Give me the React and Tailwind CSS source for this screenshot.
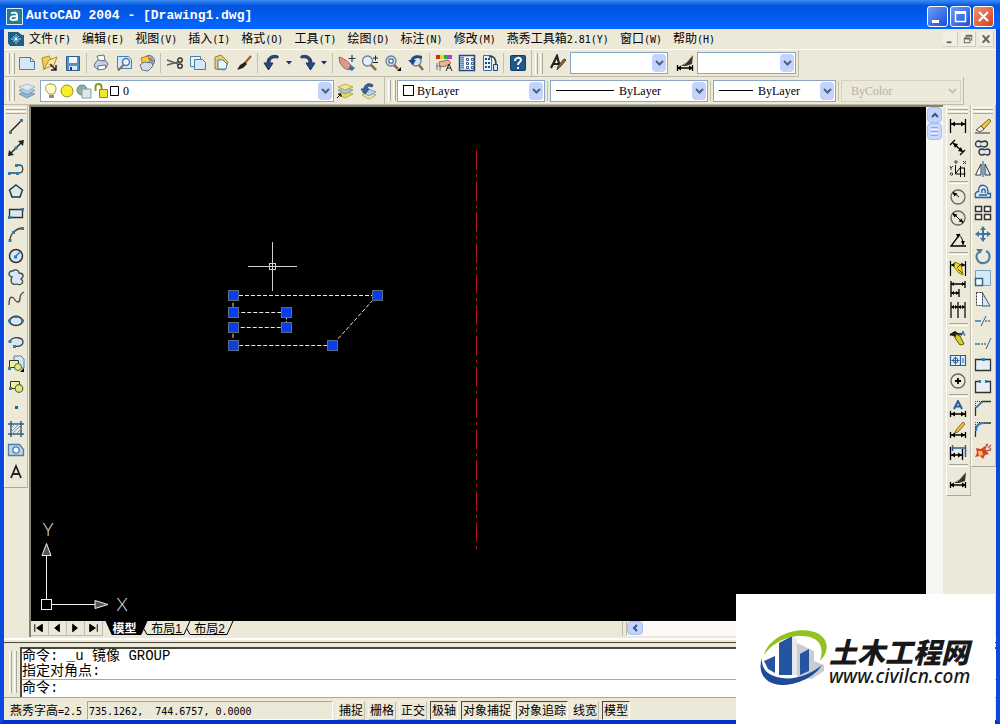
import React, { useState } from 'react';

const INK = '#222222';
const NAVY = '#1f3f66';
const BLUE = '#4a7fa8';
const PALE = '#d6e7f5';

const icons = {
    // standard
    new: <path d="M1.5 3.5h11l4 4v8h-15z M12.5 3.5v4h4" fill={PALE} stroke={BLUE} />,
    open: (
        <>
            <path d="M1 4l7-2 2 3-7 11z" fill="#f4cf5d" stroke="#b18a25" />
            <path d="M3 15l5-9 8-3-3 8z" fill="#fbe9a0" stroke="#b18a25" />
            <path d="M9 10l6 6M15 11v5h-5" stroke={INK} strokeWidth="1.5" fill="none" />
        </>
    ),
    save: (
        <>
            <path d="M2.5 2.5h13v14h-13z" fill="#5a8fc0" stroke="#2f5d8c" />
            <path d="M5 3h8v6H5z" fill="#f2f6fa" />
            <path d="M5 12h8v4H5z" fill={PALE} />
            <path d="M6 13h2v3H6z" fill={NAVY} />
        </>
    ),
    print: (
        <>
            <path d="M5 2l7-1 1 5-6 2z" fill="#fff" stroke="#5f7391" />
            <path d="M3 9l3-3 8 1 2 3-2 4-9 1-3-3z" fill="#c3cfe3" stroke="#5f7391" />
            <path d="M6 12l8-1-1 4-7 1z" fill="#fff" stroke="#5f7391" />
        </>
    ),
    preview: (
        <>
            <path d="M2.5 2.5h11l3 3v9h-14z" fill={PALE} stroke={BLUE} />
            <circle cx="11" cy="8" r="3.5" fill="#eef6ff" stroke={BLUE} strokeWidth="1.5" />
            <path d="M8.5 11L3 16.5" stroke="#8d6a4a" strokeWidth="2" />
        </>
    ),
    publish: (
        <>
            <circle cx="11" cy="7" r="5.5" fill="#9cc1e4" stroke="#3a6ea5" />
            <path d="M3 4l7-2 2 6-7 3z" fill="#f6cf3e" stroke="#a5801c" />
            <path d="M2 11l4-3 8 1 1 3-5 5-6-1z" fill="#d8dbe6" stroke="#5f7391" />
            <path d="M12 4l3 4" stroke="#d0701f" strokeWidth="2" />
        </>
    ),
    cut: (
        <>
            <path d="M1 6l11 4M1 11l11-3" stroke="#56616e" strokeWidth="1.5" />
            <circle cx="14" cy="6" r="2.2" fill="none" stroke={INK} strokeWidth="1.3" />
            <circle cx="14" cy="12" r="2.2" fill="none" stroke={INK} strokeWidth="1.3" />
        </>
    ),
    copy: (
        <>
            <path d="M1.5 2.5h10v10h-10z" fill="#eaf3fb" stroke={BLUE} />
            <path d="M5.5 5.5h8l3 3v7h-11z" fill={PALE} stroke={BLUE} />
        </>
    ),
    paste: (
        <>
            <path d="M3 3l6-2 7 7-3 8-10-1z" fill="#e3cf7c" stroke="#94803a" />
            <path d="M6 6h5l4 4-1 5H6z" fill="#eaf3fb" stroke={BLUE} />
        </>
    ),
    brush: (
        <>
            <path d="M16 2l-7 8" stroke="#9a5a2c" strokeWidth="2" />
            <path d="M10 8l2 2-4 4-6 2 3-5z" fill={INK} />
        </>
    ),
    undo: <path d="M15 2C9 0 4 3 4 9H1l4.5 7L10 9H7c0-4 2-6 8-5z" fill="#27487d" stroke="#1c355f" />,
    redo: <path d="M3 2c6-2 11 1 11 7h3l-4.5 7L8 9h3c0-4-2-6-8-5z" fill="#27487d" stroke="#1c355f" />,
    pan: (
        <>
            <path d="M1 3l3 1 5 3 4 4-3 5-4-2-4-5z" fill="#dc9a8c" stroke="#a9665c" />
            <path d="M10 15l3-4 4 3-3 3z" fill="#3f6fa5" />
            <path d="M14 1v7M10.5 4.5h7" stroke={NAVY} strokeWidth="1.2" />
        </>
    ),
    zoom: (
        <>
            <circle cx="6.5" cy="7" r="5" fill="#e4eff8" stroke="#68829a" strokeWidth="1.3" />
            <path d="M10 11l5 5" stroke="#8d6a4a" strokeWidth="2.5" />
            <path d="M12 4h5M14.5 1.5v5M12 8.5h5" stroke={INK} />
        </>
    ),
    zoomwin: (
        <>
            <circle cx="7" cy="7" r="5" fill="#d3e4f3" stroke="#68829a" strokeWidth="1.3" />
            <path d="M5 5h4v4H5z" fill="#fff" stroke="#27487d" />
            <path d="M10 11l4 4" stroke="#8d6a4a" strokeWidth="2.5" />
            <path d="M17 13v4h-4z" fill="#000" />
        </>
    ),
    zoomprev: (
        <>
            <circle cx="9" cy="7" r="5" fill="#d3e4f3" stroke="#68829a" strokeWidth="1.3" />
            <path d="M12 11l4 5" stroke="#8d6a4a" strokeWidth="2.5" />
            <path d="M15 2C9 0 5 3 4 6H1l5 5 3-5H7c1-2 4-3 8-1z" fill="#27487d" />
        </>
    ),
    props: (
        <>
            <path d="M1 1h4v4H1z" fill="#e02020" />
            <path d="M5 1h4v4H5z" fill="#e8d820" />
            <path d="M9 1h4v4H9z" fill="#20b040" />
            <path d="M13 1h4v4h-4z" fill="#b040d0" />
            <path d="M4 8l9-2 3 3-5 3-6 1z" fill="#eab39c" stroke="#a9665c" />
            <path d="M2 9v7M5 13v4M1 12h5" stroke="#5c7a96" />
            <path d="M11 17l3-7 3 7M12 14h4" stroke={INK} fill="none" />
        </>
    ),
    designcenter: (
        <>
            <path d="M1.5 1.5h15v15h-15z" fill="#f4f8fc" stroke="#27487d" strokeWidth="1.5" />
            <path d="M2 2h4v14H2z" fill="#9fbddb" />
            <path d="M3 3v12M5 3v12" stroke="#27487d" strokeDasharray="1 1" />
            <path d="M8.5 4.5h2v2h-2zM13.5 4.5h2v2h-2zM8.5 8.5h2v2h-2zM13.5 8.5h2v2h-2zM8.5 12.5h2v2h-2zM13.5 12.5h2v2h-2z" stroke="#27487d" strokeWidth=".9" />
        </>
    ),
    palette: (
        <>
            <path d="M2.5 1.5h8v15h-8z" fill="#eaf3fb" stroke="#3a6ea5" />
            <path d="M4 4h2v2H4zM7 4h2v2H7zM4 8h2v2H4zM7 8h2v2H7zM4 12h2v2H4zM7 12h2v2H7z" fill="#27487d" />
            <path d="M8 3c5-2 7 2 7 8" fill="none" stroke={NAVY} strokeWidth="1.5" />
            <path d="M12.5 10.5h4v6h-4z" fill={PALE} stroke={NAVY} />
        </>
    ),
    help: (
        <>
            <rect x="1.5" y="1.5" width="15" height="15" rx="1" fill="#1f578f" stroke="#123e6b" />
            <path d="M6 7c0-4 6-4 6-1 0 2-3 2-3 5M9 13v2" fill="none" stroke="#fff" strokeWidth="2" />
        </>
    ),
    textstyle: (
        <>
            <path d="M2 14L8 2l3 11M4 10h6" fill="none" stroke={INK} strokeWidth="2.2" />
            <path d="M17 6l-5 6-4 4 1-4 6-7z" fill="#8a6a55" stroke="#4b3a2e" />
        </>
    ),
    dimstyle: (
        <>
            <path d="M1 14h16M1.5 11v6M16.5 11v6" stroke="#000" strokeWidth="1.3" />
            <path d="M1 14l4-2.5v5zM17 14l-4-2.5v5z" fill="#000" />
            <path d="M17 1l-1 9-6 2H5l6-4z" fill="#3b302a" />
            <path d="M17 1l-9 10" stroke="#d9c6b3" strokeWidth=".7" />
        </>
    ),
    // layers
    layers: (
        <>
            <path d="M1 12l8-3 8 3-8 4z" fill="#8fb4d4" stroke="#5d86a8" strokeWidth=".7" />
            <path d="M1 8.5L9 5l8 3.5-8 4z" fill="#b5cfe4" stroke="#5d86a8" strokeWidth=".7" />
            <path d="M1 5l8-3 8 3-8 4z" fill="#dbe8f3" stroke="#8eabc4" strokeWidth=".7" />
        </>
    ),
    layercurrent: (
        <>
            <path d="M2 12l7-3 8 3-8 4z" fill="#f0d850" stroke="#a8922a" strokeWidth=".7" />
            <path d="M2 8l7-3 8 3-8 4z" fill="#a9c7e0" stroke="#5d86a8" strokeWidth=".7" />
            <path d="M2 5l7-3 8 3-8 3z" fill="#f5e58a" stroke="#a8922a" strokeWidth=".7" />
            <path d="M1 16l4-4M2 12h3v3" stroke="#000" fill="none" />
        </>
    ),
    layerprev: (
        <>
            <path d="M3 13l7-3 7 3-7 4z" fill="#f3e9b5" stroke="#a8922a" strokeWidth=".7" />
            <path d="M3 10l7-3 7 3-7 4z" fill="#b5cfe4" stroke="#5d86a8" strokeWidth=".7" />
            <path d="M14 3C9 0 5 3 5 7H2l4 5 4-5H8c0-2 2-4 5-2z" fill="#3c659b" stroke="#27487d" />
        </>
    ),
    // draw
    line: (
        <>
            <path d="M3 15L15 3" stroke={INK} strokeWidth="1.5" />
            <path d="M2 14h3v3H2zM13 2h3v3h-3z" fill="#2f7fae" />
        </>
    ),
    xline: (
        <>
            <path d="M3 15L15 3" stroke={INK} strokeWidth="1.5" />
            <path d="M1 17l1-6 5 5zM17 1l-1 6-5-5z" fill={INK} />
            <path d="M7.5 7.5h3v3h-3z" fill="#2f7fae" />
        </>
    ),
    pline: (
        <>
            <path d="M2 13h9M9 5h3c5 0 5 8 0 8" fill="none" stroke="#444" strokeWidth="1.3" />
            <path d="M1 12h3v3H1zM9 12h3v3H9zM8 4h3v3H8z" fill="#2f7fae" />
        </>
    ),
    polygon: <path d="M9 3l6.5 5-2.5 7H5L2.5 8z" fill={PALE} stroke="#333" strokeWidth="1.5" />,
    rect: (
        <>
            <path d="M2.5 5.5h13v8h-13z" fill={PALE} stroke="#333" strokeWidth="1.3" />
            <path d="M1 12h3v3H1zM14 4h3v3h-3z" fill="#2f7fae" />
        </>
    ),
    arc: (
        <>
            <path d="M3 16C3 9 8 4 15 3" fill="none" stroke="#444" strokeWidth="1.3" />
            <path d="M1.5 14h3v3h-3zM5 6h3v3H5zM14 2h3v3h-3z" fill="#2f7fae" />
        </>
    ),
    circle: (
        <>
            <circle cx="9" cy="9" r="6.5" fill={PALE} stroke="#333" strokeWidth="1.5" />
            <path d="M8 10l5-5" stroke="#2f7fae" strokeWidth="1.5" />
            <path d="M7 8.5h3v3H7z" fill="#2f7fae" />
        </>
    ),
    cloud: <path d="M5 9C0 8 2 2 6 3c2-2 6-1 6 2 5 0 5 4 2 6 4 3 0 7-4 5-3 1-8 0-5-7z" fill={PALE} stroke="#444" strokeWidth="1.3" />,
    spline: <path d="M2 15C2 4 6 7 8 10s5 3 5-2c0-3 2-5 4-6" fill="none" stroke="#444" strokeWidth="1.3" />,
    ellipse: (
        <>
            <ellipse cx="9" cy="9" rx="6.5" ry="4.5" fill={PALE} stroke="#333" strokeWidth="1.5" />
            <path d="M1 7.5h3v3H1zM14 7.5h3v3h-3zM7.5 3h3v3h-3z" fill="#2f7fae" />
        </>
    ),
    earc: (
        <>
            <path d="M3 8c3-5 13-4 13 1 0 4-5 5-9 4" fill={PALE} stroke="#444" strokeWidth="1.3" />
            <path d="M1.5 7h3v3h-3zM6 12h3v3H6z" fill="#2f7fae" />
        </>
    ),
    insert: (
        <>
            <path d="M7 1h7l3 3v9H7z" fill={PALE} stroke={BLUE} />
            <path d="M2.5 5.5h9v7h-9z" fill="#f1efa0" stroke="#333" />
            <circle cx="11" cy="12" r="3.5" fill="#dfe88e" stroke="#4e6d22" />
            <path d="M1 12h3v3H1z" fill="#2f7fae" />
            <path d="M17 13v4h-4z" fill="#000" />
        </>
    ),
    block: (
        <>
            <path d="M3.5 4.5h9v7h-9z" fill="#f1efa0" stroke="#333" />
            <circle cx="12" cy="11.5" r="3.8" fill="#dfe88e" stroke="#4e6d22" strokeWidth="1.2" />
            <path d="M2 10h3v3H2z" fill="#2f7fae" />
        </>
    ),
    point: <path d="M8 8h3v3H8z" fill="#1f6488" />,
    hatch: (
        <>
            <path d="M4 1v16M14 1v16M1 4h16M1 14h16" stroke="#2d5f85" strokeWidth="1.5" />
            <path d="M4 8l4-4M4 12l8-8M5 14l9-9M9 14l5-5" stroke="#6d9dbd" />
        </>
    ),
    region: (
        <>
            <path d="M1.5 3.5h11l4 5v6h-15z" fill="#bcd5ea" stroke={BLUE} strokeWidth="1.3" />
            <circle cx="9" cy="9" r="3.2" fill="#f3f7fa" stroke={BLUE} strokeWidth="1.3" />
        </>
    ),
    mtext: <path d="M4 15L9 3l5 12M5.5 11h7" fill="none" stroke={INK} strokeWidth="1.8" />,
    // dimension
    dimlinear: (
        <>
            <path d="M1.5 2v14M16.5 2v14M2 7h14" stroke="#000" strokeWidth="1.3" />
            <path d="M2 7l4-2.5v5zM16 7l-4-2.5v5z" fill="#000" />
        </>
    ),
    dimaligned: (
        <>
            <path d="M4 5l10 9M1 7l5-5M11 17l5-5" stroke="#000" strokeWidth="1.3" />
            <path d="M4 5l5 1-3 4zM14 14l-5-1 3-4z" fill="#000" />
        </>
    ),
    dimordinate: (
        <>
            <path d="M6.5 5v9h10M7 13l4-5h5M11.5 6v11M15.5 8v9" stroke="#000" fill="none" />
            <path d="M1 6l1 2 2-2M2 8v2M14 1l3 3M17 1l-3 3" stroke="#333" fill="none" />
            <circle cx="2.5" cy="14" r="1.2" fill="none" stroke="#333" />
            <circle cx="7" cy="2" r="1.2" fill="none" stroke="#333" />
        </>
    ),
    dimradius: (
        <>
            <circle cx="9" cy="9" r="7" fill="none" stroke="#666" strokeWidth="1.3" />
            <path d="M4 4l6 5" stroke="#000" />
            <path d="M3.5 4.5l5 1-3 3z" fill="#000" />
        </>
    ),
    dimdiameter: (
        <>
            <circle cx="9" cy="9" r="7" fill="none" stroke="#666" strokeWidth="1.3" />
            <path d="M4 4l10 10" stroke="#000" />
            <path d="M3.5 4.5l5 1-3 3zM14.5 13.5l-5-1 3-3z" fill="#000" />
        </>
    ),
    dimangular: (
        <>
            <path d="M11 3L2 15h15" fill="none" stroke="#000" strokeWidth="1.3" />
            <path d="M8 4c4 0 6 4 6 10" fill="none" stroke="#000" />
            <path d="M7 3h4L9 7zM14 14l-2-4h4z" fill="#000" />
        </>
    ),
    dimquick: (
        <>
            <path d="M1.5 2v15M16.5 2v15M2 6h14" stroke="#000" strokeWidth="1.2" />
            <path d="M2 6l4-2.5v5zM16 6l-4-2.5v5z" fill="#000" />
            <path d="M6 3l6 3 2 10-4-2-5-6z" fill="#f1dc2a" stroke="#7d7110" />
            <path d="M13 4l-5 5M9 10l4 4" stroke="#4a4410" />
        </>
    ),
    dimbaseline: (
        <>
            <path d="M2 1v16M16 1v7M10 9v8M2 4h14M2 13h8" stroke="#000" strokeWidth="1.3" />
            <path d="M2 4l3-2v4zM16 4l-3-2v4zM2 13l3-2v4zM10 13l-3-2v4z" fill="#000" />
        </>
    ),
    dimcontinue: (
        <>
            <path d="M2 1v16M9 1v16M16 1v16M2 6h14" stroke="#000" strokeWidth="1.2" />
            <path d="M2 6l3-2v4zM9 6L6 4v4zM9 6l3-2v4zM16 6l-3-2v4z" fill="#000" />
        </>
    ),
    qleader: (
        <>
            <path d="M1 6l5-3 3 2h4" fill="none" stroke="#000" strokeWidth="1.5" />
            <path d="M6 5l5 2 4 8-4 1-5-7z" fill="#d8ce2a" stroke="#5d5510" />
            <path d="M1 6l6-3v5z" fill="#222" />
            <path d="M12 7l2-5 2 5M13 5h2" fill="none" stroke="#27609b" />
        </>
    ),
    tolerance: (
        <>
            <path d="M1.5 4.5h15v10h-15zM11.5 4.5v10" fill="#e8f1f9" stroke="#27609b" strokeWidth="1.2" />
            <circle cx="6.5" cy="9.5" r="2.5" fill="none" stroke="#27609b" />
            <path d="M2.5 9.5h8M6.5 5.5v8M14 7v5" stroke="#27609b" />
        </>
    ),
    center: (
        <>
            <circle cx="9" cy="9" r="7" fill="none" stroke="#666" strokeWidth="1.3" />
            <path d="M6 9h6M9 6v6" stroke="#000" strokeWidth="1.8" />
        </>
    ),
    dimedit: (
        <>
            <path d="M5 9l4-8 4 8M6.5 6.5h5" fill="none" stroke="#27609b" strokeWidth="2" />
            <path d="M1.5 11v6M16.5 11v6M2 14h14" stroke="#000" strokeWidth="1.3" />
            <path d="M2 14l4-2.5v5zM16 14l-4-2.5v5z" fill="#000" />
        </>
    ),
    dimtedit: (
        <>
            <path d="M14 1l2 2-7 8-3 1 1-3z" fill="#eec34a" stroke="#8b6415" />
            <path d="M1.5 11v6M16.5 11v6M2 14h14" stroke="#000" strokeWidth="1.3" />
            <path d="M2 14l4-2.5v5zM16 14l-4-2.5v5z" fill="#000" />
        </>
    ),
    dimupdate: (
        <>
            <path d="M3.5 2v6M16.5 2v12M4 5h12" stroke="#27609b" strokeWidth="1.5" />
            <path d="M1.5 4v13M13.5 6v11M2 12h11" stroke="#000" strokeWidth="1.3" />
            <path d="M2 12l4-2.5v5zM13 12l-4-2.5v5z" fill="#000" />
        </>
    ),
    // modify
    erase: (
        <>
            <path d="M1 16h15" stroke="#333" />
            <path d="M15 2l2 2-7 8-3-3z" fill="#e9c94f" stroke="#8b6415" />
            <path d="M7 9l3 3-4 3-4-2z" fill="#f4ece8" stroke="#6a4a44" />
        </>
    ),
    copyobj: (
        <>
            <circle cx="4.5" cy="5" r="3" fill={PALE} stroke="#333" strokeWidth="1.3" />
            <path d="M7 3l4-1c4 1 3 6-1 6L7 7" fill={PALE} stroke="#333" strokeWidth="1.3" />
            <circle cx="8" cy="13" r="3" fill={PALE} stroke="#333" strokeWidth="1.3" />
            <path d="M10 11l3-1c4 0 4 6 0 6l-3-1" fill={PALE} stroke="#333" strokeWidth="1.3" />
        </>
    ),
    mirror: (
        <>
            <path d="M7 4v11H1.5z" fill="#fff" stroke="#333" />
            <path d="M11 4v11h5.5z" fill={PALE} stroke="#333" />
            <path d="M9 1v16" stroke="#2f7fce" strokeWidth="1.3" />
        </>
    ),
    offset: (
        <>
            <path d="M1.5 15.5h15v-4h-3c3-9-10-12-9-2-3 0-4 3-3 6z" fill={PALE} stroke="#27609b" strokeWidth="1.3" />
            <path d="M5 13h8M8 11c-2-5 5-5 3 0" fill="none" stroke="#27609b" strokeWidth="1.3" />
        </>
    ),
    array: <path d="M1.5 2.5h6v5h-6zM10.5 2.5h6v5h-6zM1.5 10.5h6v5h-6zM10.5 10.5h6v5h-6z" fill="#fff" stroke="#333" strokeWidth="1.5" />,
    move: (
        <>
            <path d="M9 3v12M3 9h12" stroke="#3f74a5" strokeWidth="2" />
            <path d="M9 1l3 4H6zM9 17l3-4H6zM1 9l4-3v6zM17 9l-4-3v6z" fill="#3f74a5" />
        </>
    ),
    rotate: (
        <>
            <path d="M6 4c-7 5-2 13 4 12 7-1 7-10 2-12" fill="none" stroke="#4c7ba6" strokeWidth="2" />
            <path d="M2 2h7l-3 5z" fill="#4c7ba6" />
        </>
    ),
    scale: (
        <>
            <path d="M1.5 1.5h15v15h-15z" fill={PALE} stroke="#7aa2c4" />
            <path d="M1.5 9.5h7v7h-7z" fill="#fff" stroke="#2f6391" strokeWidth="1.5" />
        </>
    ),
    stretch: (
        <>
            <path d="M8 2l8 14H8z" fill={PALE} stroke="#27609b" />
            <path d="M2.5 2.5h6v13h-6z" fill="#fff" stroke="#333" strokeDasharray="2 1" />
        </>
    ),
    trim: (
        <>
            <path d="M1 9h6" stroke="#2f7fae" strokeWidth="1.5" />
            <path d="M11 9h6" stroke="#333" strokeDasharray="2 1" />
            <path d="M7 14l5-10" stroke="#27609b" />
        </>
    ),
    extend: (
        <>
            <path d="M1 10h5" stroke="#2f7fae" strokeWidth="1.5" />
            <path d="M7 10h6" stroke="#333" strokeDasharray="2 1" />
            <path d="M12 15l5-11" stroke="#27609b" />
        </>
    ),
    breakpt: (
        <>
            <path d="M1.5 4.5h15v11h-15z" fill="#e6eef6" stroke="#333" strokeWidth="1.3" />
            <path d="M8 3h3v3H8z" fill="#2f7fae" />
        </>
    ),
    breakobj: (
        <>
            <path d="M6 4.5H1.5v11h15v-11H12" fill="#e6eef6" stroke="#333" strokeWidth="1.3" />
            <path d="M5 3h2v3H5zM11 3h2v3h-2z" fill="#2f7fae" />
        </>
    ),
    chamfer: (
        <>
            <path d="M1.5 17V9l7-6.5H17" fill="none" stroke="#333" strokeWidth="1.3" />
            <path d="M1.5 9V2.5h7" fill="none" stroke="#333" strokeDasharray="1 1" />
            <path d="M2 9l6-6" stroke="#2f7fce" strokeWidth="1.5" />
        </>
    ),
    fillet: (
        <>
            <path d="M1.5 17v-6c0-5 3-8 8-8H17" fill="none" stroke="#333" strokeWidth="1.3" />
            <path d="M2 11c0-5 3-8 8-8" fill="none" stroke="#2f7fce" strokeWidth="2" />
            <path d="M1.5 9V2.5h5" fill="none" stroke="#333" strokeDasharray="1 1" />
        </>
    ),
    explode: (
        <>
            <path d="M2 6l5 1 4-3 1 5 3 3-4 1-2 4-3-3-5 1 2-4z" fill="#d8422c" />
            <path d="M4 9h4l1 4-4 1z" fill="#f7c948" />
            <path d="M11 6l3-4M12 9l5-1M14 6l3-3M12 2l1 2M16 6l1 1" stroke="#b0583f" strokeWidth="1.3" />
        </>
    ),
};

const STANDARD = [
    ['new', 'open', 'save'],
    ['print', 'preview', 'publish'],
    ['cut', 'copy', 'paste', 'brush'],
    ['undo', 'caret', 'redo', 'caret'],
    ['pan', 'zoom', 'zoomwin', 'zoomprev'],
    ['props', 'designcenter', 'palette'],
    ['help'],
];

const DRAW = ['line', 'xline', 'pline', 'polygon', 'rect', 'arc', 'circle', 'cloud', 'spline', 'ellipse', 'earc', 'insert', 'block', 'point', 'hatch', 'region', 'mtext'];

const DIMENSION = [
    'dimlinear', 'dimaligned', 'dimordinate', '|',
    'dimradius', 'dimdiameter', 'dimangular', '|',
    'dimquick', 'dimbaseline', 'dimcontinue', '|',
    'qleader', 'tolerance', 'center', '|',
    'dimedit', 'dimtedit', 'dimupdate', '|',
    'dimstyle',
];

const MODIFY = ['erase', 'copyobj', 'mirror', 'offset', 'array', 'move', 'rotate', 'scale', 'stretch', 'trim', 'extend', 'breakpt', 'breakobj', 'chamfer', 'fillet', 'explode'];

const MENUS = [
    ['文件', '(F)'], ['编辑', '(E)'], ['视图', '(V)'], ['插入', '(I)'], ['格式', '(O)'], ['工具', '(T)'],
    ['绘图', '(D)'], ['标注', '(N)'], ['修改', '(M)'], ['燕秀工具箱', '2.81(Y)'], ['窗口', '(W)'], ['帮助', '(H)'],
];

const TOGGLES = [
    ['捕捉', false], ['栅格', false], ['正交', false], ['极轴', true],
    ['对象捕捉', true], ['对象追踪', true], ['线宽', false], ['模型', true],
];

function Icon({ name }) {
    return (
        <svg viewBox="0 0 18 18" fill="none" className="h-[18px] w-[18px] shrink-0">
            {icons[name]}
        </svg>
    );
}

function ToolButton({ name, className = 'w-[23px]' }) {
    return (
        <button aria-label={name} className={`flex h-[18px] shrink-0 items-center justify-center ${className}`}>
            <Icon name={name} />
        </button>
    );
}

function Grip() {
    return (
        <div className="ml-[3px] flex h-[21px] shrink-0 gap-0.5">
            <span className="w-[3px] border-r border-l border-r-[#aca899] border-l-white"></span>
            <span className="w-[3px] border-r border-l border-r-[#aca899] border-l-white"></span>
        </div>
    );
}

function Sep() {
    return <span className="mx-0.5 h-[20px] w-px shrink-0 bg-[#c5c2b0]"></span>;
}

function Combo({ label, width, children, text = '', disabled = false }) {
    return (
        <label className={`flex h-[22px] shrink-0 items-center border p-px ${width} ${disabled ? 'border-[#d5d2c2] bg-[#ece9d8]' : 'border-[#8aa5c4] bg-white'}`}>
            {children}
            <select
                aria-label={label}
                disabled={disabled}
                className={`h-full min-w-0 flex-1 appearance-none bg-transparent pl-[3px] font-['Liberation_Serif',serif] text-[12px] outline-none ${disabled ? 'text-[#b5b2a2]' : 'text-black'}`}
            >
                <option>{text}</option>
            </select>
            <span className={`flex h-full w-[14px] shrink-0 items-center justify-center rounded-sm ${disabled ? 'bg-[#eeecdf]' : 'bg-[#c3d3fb]'}`}>
                <svg viewBox="0 0 9 6" className="h-[6px] w-[9px]">
                    <path d="M1 1l3.5 3.5L8 1" fill="none" stroke={disabled ? '#c5c2b3' : '#4d6185'} strokeWidth="2" />
                </svg>
            </span>
        </label>
    );
}

function TitleBar() {
    return (
        <header className="-mx-1 flex h-[29px] shrink-0 items-center bg-linear-to-b from-[#3c8cf5] via-[#0054e0] via-20% to-[#0366ff] px-1.5 pt-[3px]">
            <svg viewBox="0 0 17 17" className="h-[17px] w-[17px]">
                <path d="M.5.5h16v16H.5z" fill="#257c96" stroke="#dff0f5" />
                <path d="M5 5.5c3-1.5 6-1 6 1.5v5.5M11 8c-4 0-6.5.5-6.5 2.5S8.5 13 11 10.5" fill="none" stroke="#fff" strokeWidth="1.8" />
            </svg>
            <h1 className="ml-[3px] flex-1 font-['Liberation_Mono',monospace] text-[13px] font-bold whitespace-pre text-white">
                AutoCAD 2004 - [Drawing1.dwg]
            </h1>
            <div className="flex gap-0.5">
                <button aria-label="Minimize" className="h-[21px] w-[21px] rounded-[3px] border border-white bg-linear-to-br from-[#6f9cf3] to-[#1c4bd8]">
                    <svg viewBox="0 0 19 19"><path d="M4 13h7v3H4z" fill="#fff" /></svg>
                </button>
                <button aria-label="Maximize" className="h-[21px] w-[21px] rounded-[3px] border border-white bg-linear-to-br from-[#6f9cf3] to-[#1c4bd8]">
                    <svg viewBox="0 0 19 19"><path d="M4.5 5h10v9.5h-10zM4 5h11" fill="none" stroke="#fff" strokeWidth="1.5" /><path d="M4 4h11v3H4z" fill="#fff" /></svg>
                </button>
                <button aria-label="Close" className="h-[21px] w-[21px] rounded-[3px] border border-white bg-linear-to-br from-[#f0906c] to-[#d63c14]">
                    <svg viewBox="0 0 19 19"><path d="M5 5l9 9M14 5l-9 9" stroke="#fff" strokeWidth="2.2" /></svg>
                </button>
            </div>
        </header>
    );
}

function MenuBar() {
    return (
        <nav className="flex h-[21px] shrink-0 items-center border-b border-white pr-0.5 pl-1">
            <svg viewBox="0 0 16 16" className="mr-[5px] h-[16px] w-[16px] shrink-0">
                <path d="M0 1h10l4 3h2v11H2l-2-3z" fill="#1d5f88" />
                <path d="M8 3v10M3 8h10M5 5l6 6M11 5l-6 6" stroke="#9fdcf2" />
                <path d="M7 7h2v2H7z" fill="#fff" />
            </svg>
            <div className="flex flex-1 gap-[11px]">
                {MENUS.map(([name, key]) => (
                    <button key={name} className="flex items-baseline text-[12px] leading-[18px] whitespace-nowrap">
                        {name}
                        <span className="font-['DejaVu_Sans_Mono',monospace] text-[10px]">{key}</span>
                    </button>
                ))}
            </div>
            <div className="flex gap-[3px]">
                {['M4 10h5v2H4z', 'M5 3h7v6h-2v3H3V6h2zM6 5v1h4v2h1V5zM4 8v3h5V8z', 'M3 4l2-1 2.5 3L10 3l2 1-3 3.5 3 3.5-2 1-2.5-3L5 12l-2-1 3-3.5z'].map((d, i) => (
                    <button key={d} aria-label={['Minimize drawing', 'Restore drawing', 'Close drawing'][i]} className="h-[15px] w-[15px] border-r border-b border-[#d0cdbd] bg-[#f1efe4]">
                        <svg viewBox="0 0 15 15"><path d={d} fill="#6a675c" fillRule="evenodd" /></svg>
                    </button>
                ))}
            </div>
        </nav>
    );
}

function StandardBar() {
    return (
        <div className="flex h-[27px] shrink-0">
            <div className="flex items-center border-r border-b border-[#bfbcab] pr-0.5">
                <Grip />
                <div className="flex items-center">
                    {STANDARD.map((group, g) => (
                        <React.Fragment key={g}>
                            {g > 0 && <Sep />}
                            {group.map((name, i) =>
                                name === 'caret' ? (
                                    <button key={i} aria-label="History" className="flex w-[12px] justify-center">
                                        <svg viewBox="0 0 6 4" className="h-[4px] w-[6px]"><path d="M0 0h6L3 3.5z" fill="#1c2f6b" /></svg>
                                    </button>
                                ) : (
                                    <ToolButton key={i} name={name} />
                                )
                            )}
                        </React.Fragment>
                    ))}
                </div>
            </div>
            <div className="flex items-center border-r border-b border-[#bfbcab] pr-0.5">
                <Grip />
                <ToolButton name="textstyle" className="ml-[3px] w-[24px]" />
                <Combo label="Text style" width="w-[98px]" />
                <ToolButton name="dimstyle" className="ml-[5px] w-[24px]" />
                <Combo label="Dimension style" width="w-[99px]" />
            </div>
        </div>
    );
}

function LayerBar() {
    return (
        <div className="flex h-[28px] shrink-0">
            <div className="flex items-center border-r border-b border-[#bfbcab] pr-[5px]">
                <Grip />
                <ToolButton name="layers" className="mr-0.5 w-[23px]" />
                <Combo label="Layer" width="w-[294px]" text="0">
                    <svg viewBox="0 0 78 18" className="h-[18px] w-[78px] shrink-0" fill="none">
                        <path d="M7 12C0 6 5 1 9 2c6 0 6 6 3 10z" fill="#fffbc0" stroke="#9c9556" />
                        <path d="M7 13h5v3H7z" fill="#8b8b8b" />
                        <circle cx="25" cy="9" r="6" fill="#f7ee2c" stroke="#9c9020" />
                        <circle cx="40" cy="8" r="5" fill="#8fb0a8" stroke="#64827c" />
                        <path d="M40 7h9v9h-9z" fill="#dfe7e9" stroke="#8b9aa0" />
                        <path d="M53.5 9V5c0-4 6-4 6 0v4" stroke="#93911e" strokeWidth="2" />
                        <path d="M57.5 7.5h8v8h-8z" fill="#f2e72e" stroke="#93861c" />
                        <path d="M68.5 4.5h8v9h-8z" fill="#fff" stroke="#000" />
                    </svg>
                </Combo>
                <ToolButton name="layercurrent" className="w-[22px]" />
                <ToolButton name="layerprev" />
            </div>
            <div className="flex items-center border-r border-b border-[#bfbcab] pr-0.5">
                <Grip />
                <span className="w-px"></span>
                <Combo label="Color" width="w-[148px]" text="ByLayer">
                    <span className="ml-1 h-[11px] w-[11px] shrink-0 border border-black"></span>
                </Combo>
                <Sep />
                <Combo label="Linetype" width="w-[158px]" text="ByLayer">
                    <span className="mr-0.5 ml-1 h-px w-[58px] shrink-0 bg-black"></span>
                </Combo>
                <Sep />
                <Combo label="Lineweight" width="w-[123px]" text="ByLayer">
                    <span className="mr-0.5 ml-1 h-px w-[34px] shrink-0 bg-black"></span>
                </Combo>
                <Sep />
                <Combo label="Plot style" width="w-[120px]" text="ByColor" disabled>
                    <span className="w-[5px]"></span>
                </Combo>
            </div>
        </div>
    );
}

function ToolColumn({ names, width, height }) {
    return (
        <aside className={`shrink-0 self-start border-r border-b border-l border-r-[#bfbcab] border-b-[#aca899] border-l-white pr-px pb-[6px] ${width}`}>
            <div className="mx-auto mt-0.5 mb-[3px] flex h-[7px] w-[20px] flex-col gap-px">
                <span className="h-[3px] border-t border-b border-t-white border-b-[#aca899]"></span>
                <span className="h-[3px] border-t border-b border-t-white border-b-[#aca899]"></span>
            </div>
            <div className={`flex flex-col items-center justify-between ${height}`}>
                {names.map((name, i) =>
                    name === '|' ? (
                        <span key={i} className="h-[3px] w-[19px] border-t border-b border-t-[#aca899] border-b-white"></span>
                    ) : (
                        <ToolButton key={i} name={name} className="w-[20px]" />
                    )
                )}
            </div>
        </aside>
    );
}

const GRIPS = [[202, 188], [346, 188], [202, 205], [255, 205], [202, 220], [255, 220], [202, 238], [301, 238]];

function Drawing() {
    return (
        <div className="min-h-0 flex-1 overflow-hidden bg-black">
            <svg width="895" height="514" fill="none">
                <path d="M445.5 43v403" stroke="#b01020" strokeDasharray="20 4 3 4" />
                <path d="M202 188.5h144L301 238.5H202V220.5h53.5V205.5H202V188.5" stroke="#e8e8e8" strokeDasharray="4 2" />
                {GRIPS.map(([x, y]) => (
                    <rect key={`${x}-${y}`} x={x - 4.5} y={y - 4.5} width="10" height="10" fill="#0a3cf0" stroke="#5a6d80" />
                ))}
                <path d="M241.5 135v49M217 159.5h49" stroke="#d0d0d0" />
                <rect x="238.5" y="156.5" width="6" height="6" stroke="#d0d0d0" />
                {/* UCS icon */}
                <g stroke="#f0f0f0">
                    <rect x="10.5" y="492.5" width="10" height="10" />
                    <path d="M15.5 492V449M21 497.5h44" />
                    <path d="M15.5 436.5l-4.5 12h9zM77 497.5l-13-4v8z" fill="#555" />
                </g>
                <g fill="#e8e8e8" fontFamily="Lato, sans-serif" fontWeight="300" fontSize="18" textAnchor="middle">
                    <text x="17" y="429">Y</text>
                    <text x="91" y="504">X</text>
                </g>
            </svg>
        </div>
    );
}

function SheetTabs() {
    return (
        <div className="flex h-[16px] shrink-0 items-start">
            <div className="flex">
                {['M4 3v8M12 3v8L6 7z', 'M11 3v8L6 7z', 'M6 3v8l5-4z', 'M5 3v8l6-4zM13 3v8'].map((d, i) => (
                    <button key={d} aria-label={['First tab', 'Previous tab', 'Next tab', 'Last tab'][i]} className="h-[15px] w-[18px] border-r border-b border-[#bfbcab]">
                        <svg viewBox="0 0 18 14" className="h-[14px] w-[17px]"><path d={d} fill="#000" stroke="#000" /></svg>
                    </button>
                ))}
            </div>
            <div className="flex flex-1">
                {['模型', '布局1', '布局2'].map((name, i) => (
                    <button
                        key={name}
                        className={`relative flex h-[15px] w-[43px] items-center justify-center text-[12px] leading-none ${i === 0 ? 'ml-0.5 pr-1 font-bold text-white' : 'pr-1.5 text-black'}`}
                    >
                        <svg viewBox="0 0 43 15" className="absolute inset-0 h-[15px] w-[43px] overflow-visible">
                            <path d={i === 0 ? 'M1 0l6 13.5h29L42 0' : 'M-4 8l3 5.5h37L42 0'} fill={i === 0 ? '#000' : 'none'} stroke="#000" />
                        </svg>
                        <span className="relative whitespace-nowrap">{name}</span>
                    </button>
                ))}
            </div>
            <div className="flex h-[15px] w-[321px] bg-[#fbfaf6]">
                <span className="w-[5px] border-r border-l border-[#bfbcab] bg-[#ece9d8]"></span>
                <button aria-label="Scroll left" className="flex h-[14px] w-[16px] items-center justify-center rounded-sm border border-[#a9bdf0] bg-[#c3d3fb]">
                    <svg viewBox="0 0 6 8" className="h-[8px] w-[6px]"><path d="M5 1L2 4l3 3" fill="none" stroke="#3c5180" strokeWidth="2" /></svg>
                </button>
            </div>
        </div>
    );
}

function CommandWindow() {
    const [command, setCommand] = useState('');
    return (
        <section className="flex h-[50px] shrink-0 font-['Liberation_Mono','Noto_Sans_CJK_SC',monospace] text-[14px]">
            <div className="my-1 mr-0.5 ml-[5px] flex w-[9px] gap-0.5">
                <span className="w-[3px] border-r border-l border-r-[#aca899] border-l-white"></span>
                <span className="w-[3px] border-r border-l border-r-[#aca899] border-l-white"></span>
            </div>
            <div className="flex flex-1 flex-col border-t-2 border-l-2 border-[#4a473c] bg-white">
                <div className="flex-1 border-b border-[#aca899] whitespace-pre">
                    <p className="h-[15px] leading-[15px]">命令: _u 镜像 GROUP</p>
                    <p className="h-[15px] leading-[15px]">指定对角点:</p>
                </div>
                <label className="flex h-[17px] items-center">
                    命令:
                    <input value={command} onChange={(e) => setCommand(e.target.value)} className="h-full flex-1 bg-transparent pl-2 outline-none" />
                </label>
            </div>
        </section>
    );
}

function StatusBar() {
    const [toggles, setToggles] = useState(TOGGLES);
    const flip = (index) => setToggles(toggles.map(([name, on], i) => [name, i === index ? !on : on]));
    return (
        <footer className="flex h-[23px] shrink-0 items-end border-t border-[#aca899] text-[12px] leading-[17px] whitespace-pre">
            <span className="flex w-[83px] items-baseline pl-[6px]">
                燕秀字高
                <span className="font-['DejaVu_Sans_Mono',monospace] text-[10px]">=2.5</span>
            </span>
            <output className="mr-1 h-[19px] w-[246px] border border-t-[#aca899] border-r-white border-b-white border-l-[#aca899] pt-px pl-px font-['DejaVu_Sans_Mono',monospace] text-[10px]">
                735.1262,  744.6757, 0.0000
            </output>
            <div className="flex gap-[3px]">
                {toggles.map(([name, on], i) => (
                    <button
                        key={name}
                        aria-pressed={on}
                        onClick={() => flip(i)}
                        className={`h-[19px] border px-px pt-0.5 leading-[15px] ${on ? 'border-t-[#4a473c] border-r-white border-b-white border-l-[#4a473c]' : 'border-t-[#f6f4ea] border-r-[#bfbcab] border-b-[#bfbcab] border-l-[#f6f4ea]'}`}
                    >
                        {name}
                    </button>
                ))}
            </div>
        </footer>
    );
}

function SiteBadge() {
    return (
        <div className="absolute right-[5px] bottom-0 flex h-[130px] w-[259px] items-center bg-white pl-[23px]">
            <svg viewBox="0 0 70 60" className="h-[60px] w-[70px] shrink-0">
                <path d="M38 14l17 8v10l10 4v6l-12 8-15-2z" fill="#c9ccd1" />
                <path d="M20 14l13-7v39H20z" fill="#2554a0" />
                <path d="M33 7l5 3v36h-5z" fill="#e6e9ee" />
                <path d="M5 32l11-5v17l-7-4z" fill="#2554a0" />
                <path d="M41 25l9-5v22l-9 4z" fill="#2554a0" />
                <path d="M5 26C10 6 42-5 60 5c12 8 8 20 1 27C67 12 55 6 38 7 22 9 11 17 5 26z" fill="#94c11f" />
                <path d="M3 29c-5 14 3 28 22 27 17-1 32-10 38-20-12 10-28 15-40 13C9 47 2 40 3 29z" fill="#1f4a96" />
            </svg>
            <div className="pt-2 italic">
                <p className="text-[28px] leading-[27px] font-black whitespace-nowrap text-[#181818]">土木工程网</p>
                <p className="font-['Noto_Sans',sans-serif] text-[19px] leading-[19px] font-medium text-[#181818]">www.civilcn.com</p>
            </div>
        </div>
    );
}

export default function App() {
    return (
        <div className="relative h-screen overflow-hidden font-['Liberation_Sans','Noto_Sans_CJK_SC',sans-serif] text-black">
            <div className="flex h-full flex-col border-x-4 border-b-4 border-x-[#0a48e0] border-b-[#0831c9] bg-[#ece9d8]">
                <TitleBar />
                <MenuBar />
                <StandardBar />
                <LayerBar />
                <main className="flex min-h-0 flex-1">
                    <ToolColumn names={DRAW} width="mr-px w-[24px]" height="h-[364px]" />
                    <div className="mr-[3px] flex min-w-0 flex-1 flex-col border-t-2 border-l-2 border-[#85826f]">
                        <div className="flex min-h-0 flex-1">
                            <Drawing />
                            <div className="flex w-[17px] shrink-0 flex-col items-center bg-[#f7f6f1]">
                                <button aria-label="Scroll up" className="flex h-[16px] w-[15px] items-center justify-center rounded-sm border border-[#a9bdf0] bg-[#c3d3fb]">
                                    <svg viewBox="0 0 8 6" className="h-[6px] w-[8px]"><path d="M1 5l3-3 3 3" fill="none" stroke="#3c5180" strokeWidth="2" /></svg>
                                </button>
                                <span className="flex h-[17px] w-[15px] flex-col justify-center gap-px rounded-sm border border-[#a9bdf0] bg-[#c9d8fc] px-[3px]">
                                    <span className="h-px bg-[#8ea6df]"></span>
                                    <span className="h-px bg-[#eef3ff]"></span>
                                    <span className="h-px bg-[#8ea6df]"></span>
                                    <span className="h-px bg-[#eef3ff]"></span>
                                    <span className="h-px bg-[#8ea6df]"></span>
                                </span>
                            </div>
                        </div>
                        <SheetTabs />
                    </div>
                    <ToolColumn names={DIMENSION} width="w-[25px]" height="h-[372px]" />
                    <ToolColumn names={MODIFY} width="w-[25px]" height="h-[343px]" />
                </main>
                <div className="flex h-[10px] shrink-0 flex-col pt-px">
                    <span className="h-0.5 bg-white"></span>
                    <span className="mt-0.5 h-px bg-[#4a473c]"></span>
                </div>
                <CommandWindow />
                <StatusBar />
            </div>
            <SiteBadge />
        </div>
    );
}
